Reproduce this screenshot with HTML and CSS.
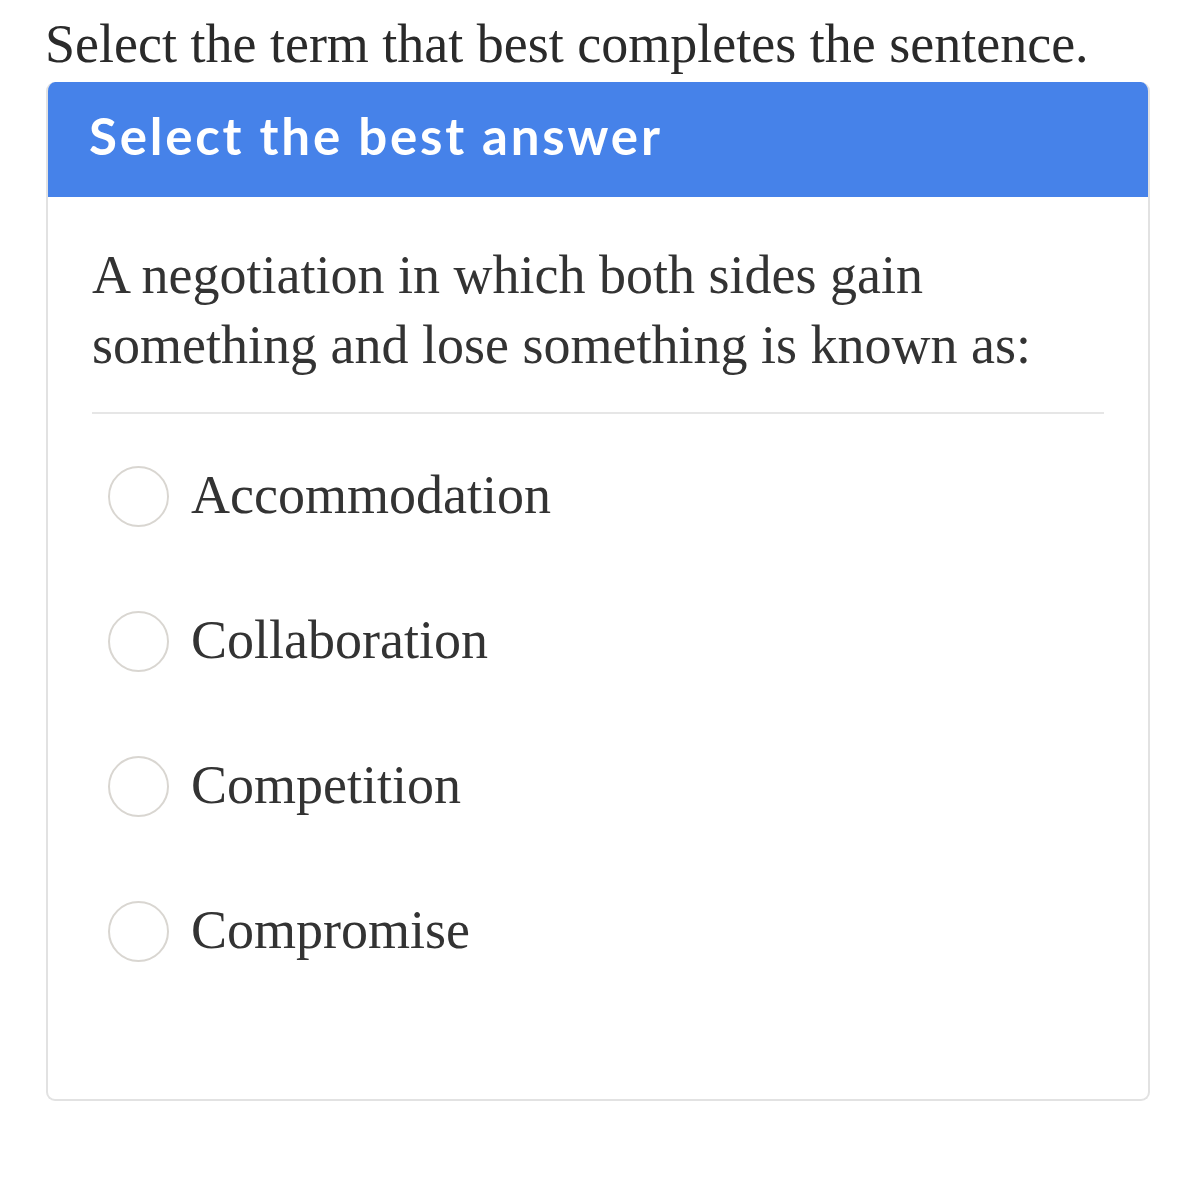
FILE: index.html
```html
<!DOCTYPE html>
<html>
<head>
<meta charset="utf-8">
<link rel="stylesheet" href="styles.css">
</head>
<body>
<div class="page">
  <h1 class="prompt">Select the term that best completes the sentence.</h1>
  <div class="card">
    <div class="card-header">Select the best answer</div>
    <div class="card-body">
      <p class="question">A negotiation in which both sides gain something and lose something is known as:</p>
      <hr class="divider">
      <ul class="options">
        <li class="option"><span class="radio"></span><span class="label">Accommodation</span></li>
        <li class="option"><span class="radio"></span><span class="label">Collaboration</span></li>
        <li class="option"><span class="radio"></span><span class="label">Competition</span></li>
        <li class="option"><span class="radio"></span><span class="label">Compromise</span></li>
      </ul>
    </div>
  </div>
</div>
</body>
</html>
```

FILE: styles.css
```css
html, body {
  margin: 0;
  padding: 0;
  background: #ffffff;
}
.page {
  padding: 14px 48px 0 45px;
  font-family: "Liberation Serif", "DejaVu Serif", serif;
  color: #333333;
}
.prompt {
  margin: 0 0 8px 0;
  font-weight: normal;
  font-size: 54px;
  line-height: 60px;
  color: #2a2a2a;
  white-space: nowrap;
}
.card {
  margin-left: 1px;
  width: 1104px;
  box-sizing: border-box;
  border: 2px solid #e2e2e2;
  border-top: none;
  border-radius: 9px;
  overflow: hidden;
}
.card-header {
  background: #4682e9;
  color: #ffffff;
  font-family: "Lato", "Open Sans", sans-serif;
  font-weight: 700;
  font-size: 51px;
  letter-spacing: 2.8px;
  height: 115px;
  line-height: 108px;
  padding-left: 43px;
  margin: 0 -2px;
}
.card-body {
  padding: 43px 44px 95px 44px;
}
.question {
  margin: 0;
  font-size: 54px;
  line-height: 70px;
  color: #333333;
}
.divider {
  border: none;
  border-top: 2px solid #e6e6e6;
  margin: 32px 0 10px 0;
}
.options {
  list-style: none;
  margin: 0;
  padding: 0;
}
.option {
  display: flex;
  align-items: center;
  height: 145px;
}
.radio {
  width: 57px;
  height: 57px;
  border: 2px solid #d9d6d1;
  border-radius: 50%;
  margin-left: 16px;
  margin-right: 22px;
  flex-shrink: 0;
}
.label {
  font-size: 54px;
  line-height: 60px;
  padding-bottom: 4px;
  color: #333333;
}
```
